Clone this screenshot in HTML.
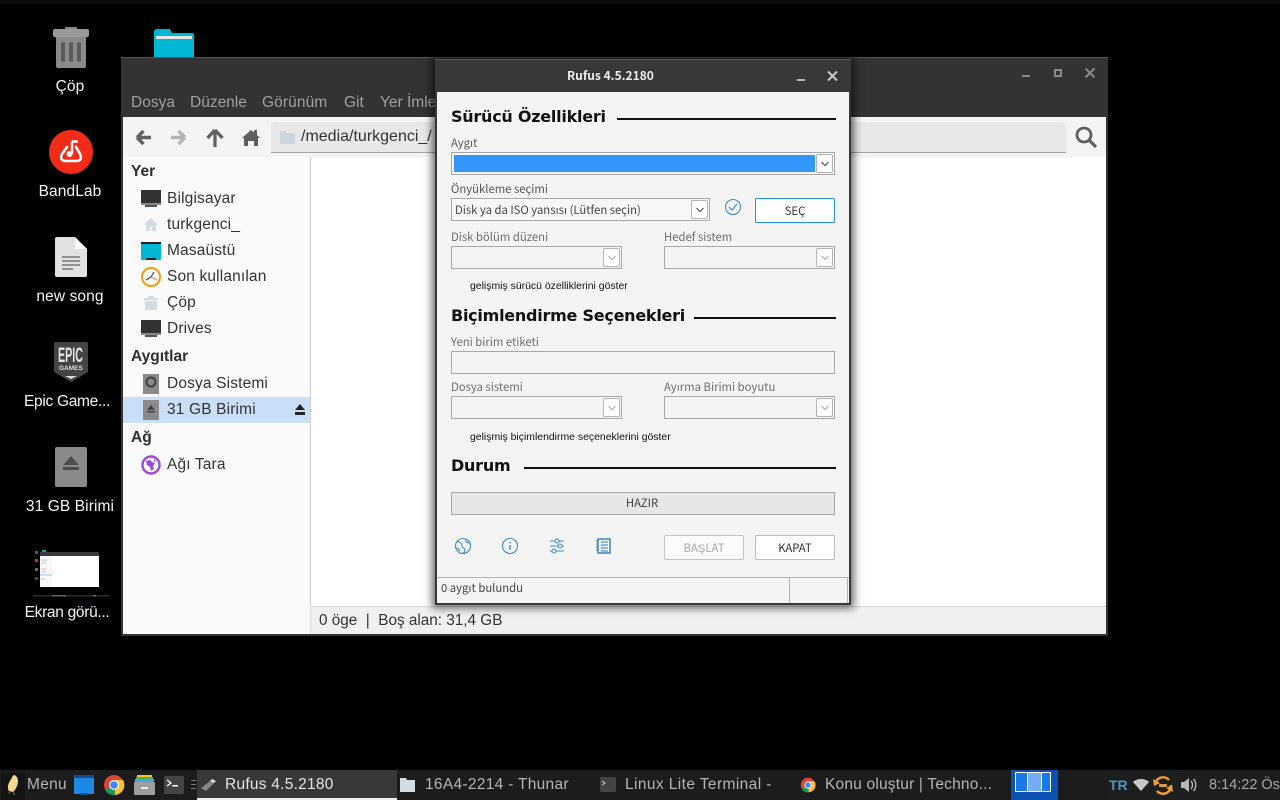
<!DOCTYPE html>
<html><head><meta charset="utf-8">
<style>
html,body{margin:0;padding:0;background:#000;width:1280px;height:800px;overflow:hidden}
div,span,svg{position:absolute}
.t{white-space:nowrap;font-family:"Liberation Sans",sans-serif;line-height:20px}
.d{color:#f4f4f4;font-size:15.5px;text-align:center;width:120px;left:10px;letter-spacing:.1px}
.s{color:#333;font-size:15.5px;left:167px;letter-spacing:.15px}
.h{color:#2e2e2e;font-size:15.5px;font-weight:bold;left:131px}
.m{color:#a0a0a0;font-size:15.5px;top:93px}
.r{font-family:"Noto Sans CJK JP","Liberation Sans",sans-serif;font-size:11.3px;color:#555;line-height:16px;white-space:nowrap}
.hd{font-family:"DejaVu Sans",sans-serif;font-weight:bold;font-size:16px;letter-spacing:-.25px;color:#111;line-height:22px;white-space:nowrap;left:451px}
.ln{background:#111;height:2px;right:0}
.cb{box-sizing:border-box;border:1px solid #a8a8a8;height:23px;background:#f4f4f4}
.ar{box-sizing:border-box;border:1px solid #b4b4b4;border-radius:2px;background:#fff;width:17px;height:19px;right:1px;top:1px}
.ar svg{left:3px;top:5px}
.tb{color:#b4b4b4;font-size:15.5px;top:775px;letter-spacing:.3px}
.g{left:470px;font-size:10.45px;color:#111}
</style></head><body>
<div style="left:0;top:0;width:1280px;height:4px;background:#0a0a0a"></div>

<!-- desktop icons -->
<svg style="left:50px;top:24px" width="42" height="46" viewBox="0 0 42 46"><rect x="15" y="3" width="12" height="4" rx="1" fill="#8a8a8a"/><rect x="3" y="5" width="36" height="8" rx="2" fill="#9a9a9a"/><path d="M6 13h30v29a2 2 0 0 1-2 2H8a2 2 0 0 1-2-2z" fill="#8a8a8a"/><rect x="11" y="18" width="4" height="20" rx="2" fill="#5c5c5c"/><rect x="19" y="18" width="4" height="20" rx="2" fill="#5c5c5c"/><rect x="27" y="18" width="4" height="20" rx="2" fill="#5c5c5c"/></svg>
<div class="t d" style="top:77px">Çöp</div>
<svg style="left:154px;top:29px" width="40" height="29" viewBox="0 0 40 29"><path d="M0 3a3 3 0 0 1 3-3h13l2 4h20a2 2 0 0 1 2 2v23H0z" fill="#00b8d4"/><rect x="2" y="7" width="36" height="3" fill="#e6e6e6"/></svg>
<svg style="left:49px;top:130px" width="44" height="44" viewBox="0 0 44 44"><circle cx="22" cy="22" r="22" fill="#f32c1a"/><path d="M18 17L13 24Q10 31 17 31H27Q34 31 31 24L27 17" fill="none" stroke="#fff" stroke-width="2.600" stroke-linecap="round"/><path d="M23 11.500V24M23 11.500h6" fill="none" stroke="#fff" stroke-width="2.400"/><circle cx="20.500" cy="24" r="3" fill="#fff"/></svg>
<div class="t d" style="top:182px">BandLab</div>
<svg style="left:55px;top:237px" width="32" height="40" viewBox="0 0 32 40"><path d="M2 0h18l12 12v26a2 2 0 0 1-2 2H2a2 2 0 0 1-2-2V2a2 2 0 0 1 2-2z" fill="#e2e2e2"/><path d="M20 0l12 12H20z" fill="#f8f8f8"/><path d="M7 20h18M7 24h18M7 28h18M7 32h11" stroke="#777" stroke-width="1.600"/></svg>
<div class="t d" style="top:287px">new song</div>
<svg style="left:54px;top:342px" width="34" height="40" viewBox="0 0 34 40"><path d="M2 0h30a2 2 0 0 1 2 2v28l-17 10L0 30V2a2 2 0 0 1 2-2z" fill="#444"/><path d="M11 34h12l-6 3z" fill="#ddd"/></svg>
<div class="t" style="left:58px;top:346px;font-size:21px;font-weight:bold;color:#e4e4e4;line-height:20px;transform:scaleX(.51);transform-origin:left">EPIC</div>
<div class="t" style="left:59px;top:365px;font-size:6.500px;font-weight:bold;color:#ddd;line-height:8px">GAMES</div>
<div class="t d" style="top:392px;left:7px;letter-spacing:-.3px">Epic Game...</div>
<div style="left:55px;top:447px;width:32px;height:40px;background:#8a8a8a;border-radius:2px"></div>
<svg style="left:55px;top:447px" width="32" height="40" viewBox="0 0 32 40"><path d="M16 9l8 9H8z" fill="#4d4d4d"/><rect x="8" y="20" width="16" height="3" fill="#4d4d4d"/></svg>
<div class="t d" style="top:497px">31 GB Birimi</div>
<!-- thumbnail -->
<svg style="left:30px;top:545px" width="80" height="55" viewBox="0 0 80 55"><rect x="10" y="7" width="59" height="35" fill="#fff"/><rect x="10" y="7" width="59" height="4" fill="#3a3a3a"/><rect x="10" y="11" width="12" height="31" fill="#f7f7f7"/><path d="M11 15h6M11 18h5M11 24h6M11 27h5M11 34h4" stroke="#c8c8c8" stroke-width="1"/><rect x="10" y="29" width="12" height="2" fill="#c9dff8"/><rect x="12" y="5" width="4" height="2" fill="#00a0b8"/><rect x="5" y="6" width="3" height="3" fill="#555"/><rect x="5" y="14" width="3" height="3" fill="#c8301c"/><rect x="5" y="23" width="3" height="3" fill="#666"/><rect x="5" y="32" width="3" height="3" fill="#444"/><rect x="3" y="50" width="77" height="1.500" fill="#2b2b2b"/><rect x="63" y="50" width="3" height="1.500" fill="#3a78c8"/><rect x="22" y="50" width="14" height="1.500" fill="#666"/></svg>
<div class="t d" style="top:603px;left:7px;letter-spacing:-.3px">Ekran görü...</div>

<!-- thunar window -->
<div style="left:121px;top:57px;width:987px;height:579px;background:#333;box-shadow:inset 0 1px 0 #555"></div>
<div class="t m" style="left:131px">Dosya</div>
<div class="t m" style="left:190px">Düzenle</div>
<div class="t m" style="left:262px;letter-spacing:.1px">Görünüm</div>
<div class="t m" style="left:344px">Git</div>
<div class="t m" style="left:380px">Yer İmleri</div>
<svg style="left:1018px;top:64px" width="82" height="20" viewBox="0 0 82 20"><rect x="4" y="11" width="8" height="2" fill="#8a8a8a"/><rect x="37" y="6" width="6" height="6" fill="none" stroke="#8a8a8a" stroke-width="2"/><path d="M67.500 4.500l9 9M76.500 4.500l-9 9" stroke="#8a8a8a" stroke-width="2"/></svg>
<div style="left:123px;top:117px;width:983px;height:40px;background:#f4f4f4"></div>
<svg style="left:130px;top:125px" width="140" height="24" viewBox="0 0 140 24"><path d="M7 12.500l6.500-6.500M7 12.500l6.500 6.500M7 12.500h14" fill="none" stroke="#5f5f5f" stroke-width="3.400"/><path d="M55 12.500l-6.500-6.500M55 12.500l-6.500 6.500M55 12.500H41" fill="none" stroke="#b5b5b5" stroke-width="3.400"/><path d="M85 5l-7.500 8M85 5l7.500 8M85 5v17" fill="none" stroke="#5f5f5f" stroke-width="3.200"/><path d="M121 5l3 2.500V5h3v5l3 3h-2v8h-4v-5h-6v5h-4v-8h-2z" fill="#5f5f5f"/></svg>
<div style="left:271px;top:122px;width:795px;height:31px;background:#e8e8e8;border-bottom:1px solid #a5a5a5;border-radius:4px 4px 0 0;box-sizing:border-box"></div>
<svg style="left:280px;top:130px" width="15" height="14" viewBox="0 0 15 14"><path d="M0 1h6l1 2h8v11H0z" fill="#ccd6de"/></svg>
<div class="t" style="left:301px;top:127px;font-size:16px;color:#333">/media/turkgenci_/</div>
<svg style="left:1074px;top:125px" width="24" height="24" viewBox="0 0 24 24"><circle cx="10" cy="10" r="7" fill="none" stroke="#5f5f5f" stroke-width="2.800"/><path d="M15 15l7 7" stroke="#5f5f5f" stroke-width="3.200"/></svg>

<div style="left:123px;top:157px;width:187px;height:477px;background:#fafafa"></div>
<div style="left:310px;top:157px;width:1px;height:449px;background:#ccc"></div>
<div style="left:311px;top:157px;width:795px;height:449px;background:#fff"></div>
<div style="left:311px;top:606px;width:795px;height:28px;background:#f0f0f0;border-top:1px solid #d8d8d8;box-sizing:border-box"></div>
<div style="left:310px;top:606px;width:1px;height:28px;background:#e0e0e0"></div>
<div class="t" style="left:319px;top:611px;font-size:15.300px;color:#333">0 öge &nbsp;|&nbsp; Boş alan: 31,4 GB</div>

<div class="t h" style="top:162px">Yer</div>
<div class="t s" style="top:189px">Bilgisayar</div>
<div class="t s" style="top:215px">turkgenci_</div>
<div class="t s" style="top:241px">Masaüstü</div>
<div class="t s" style="top:267px">Son kullanılan</div>
<div class="t s" style="top:293px">Çöp</div>
<div class="t s" style="top:319px">Drives</div>
<div class="t h" style="top:347px">Aygıtlar</div>
<div style="left:123px;top:397px;width:187px;height:26px;background:#c9dff8"></div>
<div class="t s" style="top:374px">Dosya Sistemi</div>
<div class="t s" style="top:400px">31 GB Birimi</div>
<div class="t h" style="top:428px">Ağ</div>
<div class="t s" style="top:455px">Ağı Tara</div>

<svg style="left:140px;top:188px" width="22" height="292" viewBox="0 0 22 292">
<rect x="1" y="2" width="20" height="15" fill="#333"/><rect x="1" y="15" width="20" height="2" fill="#888"/><rect x="5" y="17" width="12" height="2" fill="#555"/>
<path d="M11 30l7 6.500h-2V43h-4v-4h-2v4H6v-6.500H4z" fill="#d2dce3"/>
<rect x="1" y="54" width="20" height="18" fill="#00b8d4"/><rect x="1" y="54" width="20" height="2" fill="#222"/><rect x="6" y="70" width="10" height="2" fill="#222"/>
<circle cx="11" cy="89" r="9" fill="#fff" stroke="#f59a0b" stroke-width="2"/><path d="M11 89l3-5M11 89l-5 3" stroke="#444" stroke-width="1.200"/><path d="M11 89l6 3" stroke="#d88" stroke-width="1"/>
<path d="M4 110h14v2H4zM5 113h12v9H5z" fill="#d2dce3"/><rect x="8" y="108" width="6" height="2" fill="#d2dce3"/>
<rect x="1" y="132" width="20" height="15" fill="#333"/><rect x="1" y="145" width="20" height="2" fill="#888"/><rect x="5" y="147" width="12" height="2" fill="#555"/>
<rect x="3" y="186" width="16" height="20" fill="#8a8a8a"/><circle cx="11" cy="194" r="4.500" fill="none" stroke="#3f3f3f" stroke-width="2"/>
<rect x="3" y="212" width="16" height="20" fill="#8a8a8a"/><path d="M11 217l4 5H7z" fill="#444"/><rect x="7" y="223" width="8" height="1.500" fill="#444"/>
<circle cx="11" cy="277" r="8.500" fill="#fff" stroke="#a048d8" stroke-width="2.400"/><path d="M6 273l4-1 2 2 3 1-2 3 1 3-3 2-1-4-3-2zM14 271l2 2-2 1z" fill="#a048d8"/>
</svg>
<svg style="left:294px;top:403px" width="12" height="14" viewBox="0 0 12 14"><path d="M6 1l5 6H1z" fill="#222"/><rect x="1" y="9" width="10" height="3" fill="#222"/></svg>

<!-- rufus -->
<div style="left:435px;top:59px;width:416px;height:546px;background:#383838;box-shadow:0 0 8px 3px rgba(0,0,0,.6),inset 0 1px 0 #555"></div>
<div style="left:437px;top:92px;width:412px;height:511px;background:#f4f4f4"></div>
<div class="t" style="left:567px;top:66px;font-family:'Noto Sans CJK JP','Liberation Sans',sans-serif;font-weight:bold;font-size:12px;color:#eee">Rufus 4.5.2180</div>
<svg style="left:793px;top:68px" width="50" height="16" viewBox="0 0 50 16"><rect x="4" y="11" width="8" height="2" fill="#b5b5b5"/><path d="M35 3.500l9 9M44 3.500l-9 9" stroke="#c8c8c8" stroke-width="2"/></svg>

<div class="hd" style="top:106px">Sürücü Özellikleri</div>
<div class="ln" style="left:617px;top:118px;width:219px"></div>
<div class="r" style="left:451px;top:135px">Aygıt</div>
<div class="cb" style="left:451px;top:152px;width:384px"><div style="left:2px;top:2px;width:361px;height:17px;background:#3296fa"></div><div class="ar"><svg width="10" height="8"><path d="M1.500 2l3.500 3.500L8.500 2" fill="none" stroke="#444"/></svg></div></div>

<div class="r" style="left:451px;top:181px">Önyükleme seçimi</div>
<div class="cb" style="left:451px;top:198px;width:259px;background:#f7f7f7"><div class="ar"><svg width="10" height="8"><path d="M1.500 2l3.500 3.500L8.500 2" fill="none" stroke="#444"/></svg></div></div>
<div class="r" style="left:455px;top:202px;color:#444">Disk ya da ISO yansısı (Lütfen seçin)</div>
<svg style="left:724px;top:198px" width="18" height="18" viewBox="0 0 18 18"><circle cx="9" cy="9" r="7.500" fill="none" stroke="#3a8fc8" stroke-width="1.100"/><path d="M5 9l3 3 5-6" fill="none" stroke="#3a8fc8" stroke-width="1.100"/></svg>
<div style="left:755px;top:198px;width:80px;height:25px;box-sizing:border-box;background:#fff;border:1px solid #1e90e6;border-radius:2px"></div>
<div class="r" style="left:755px;width:80px;text-align:center;top:203px;color:#333">SEÇ</div>

<div class="r" style="left:451px;top:229px;color:#6e6e6e">Disk bölüm düzeni</div>
<div class="r" style="left:664px;top:229px;color:#6e6e6e">Hedef sistem</div>
<div class="cb" style="left:451px;top:246px;width:171px"><div class="ar"><svg width="10" height="8"><path d="M1.500 2l3.500 3.500L8.500 2" fill="none" stroke="#aaa"/></svg></div></div>
<div class="cb" style="left:664px;top:246px;width:171px"><div class="ar"><svg width="10" height="8"><path d="M1.500 2l3.500 3.500L8.500 2" fill="none" stroke="#aaa"/></svg></div></div>
<div class="t g" style="top:278px;line-height:18px;height:18px">gelişmiş sürücü özelliklerini göster</div>

<div class="hd" style="top:305px">Biçimlendirme Seçenekleri</div>
<div class="ln" style="left:694px;top:317px;width:142px"></div>
<div class="r" style="left:451px;top:334px;color:#6e6e6e">Yeni birim etiketi</div>
<div class="cb" style="left:451px;top:351px;width:384px"></div>
<div class="r" style="left:451px;top:379px;color:#6e6e6e">Dosya sistemi</div>
<div class="r" style="left:664px;top:379px;color:#6e6e6e">Ayırma Birimi boyutu</div>
<div class="cb" style="left:451px;top:396px;width:171px"><div class="ar"><svg width="10" height="8"><path d="M1.500 2l3.500 3.500L8.500 2" fill="none" stroke="#aaa"/></svg></div></div>
<div class="cb" style="left:664px;top:396px;width:171px"><div class="ar"><svg width="10" height="8"><path d="M1.500 2l3.500 3.500L8.500 2" fill="none" stroke="#aaa"/></svg></div></div>
<div class="t g" style="top:429px;line-height:18px;height:18px">gelişmiş biçimlendirme seçeneklerini göster</div>

<div class="hd" style="top:455px">Durum</div>
<div class="ln" style="left:524px;top:467px;width:312px"></div>
<div class="cb" style="left:451px;top:492px;width:384px;background:#e6e6e6"></div>
<div class="r" style="left:451px;width:382px;text-align:center;top:495px;color:#444">HAZIR</div>

<svg style="left:453px;top:536px" width="170" height="20" viewBox="0 0 170 20" fill="none" stroke="#3a8fc8" stroke-width="1.100">
<circle cx="10" cy="10" r="7.500"/><path d="M4 5c3 1 5 3 5 5s3 2 3 4-2 3-2 3M13 3c-1 3 1 4 4 4M3 12c2 0 3 1 4 3"/>
<circle cx="57" cy="10" r="7.500"/><path d="M57 9v5M57 6v1.500" stroke-width="1.400"/>
<path d="M97 5h14M97 10h14M97 15h14"/><circle cx="104" cy="5" r="2" fill="#f4f4f4"/><circle cx="107" cy="10" r="2" fill="#f4f4f4"/><circle cx="101" cy="15" r="2" fill="#f4f4f4"/>
<rect x="145" y="3" width="12" height="14" stroke-width="1.400" stroke="#2a7ec0"/><path d="M148 6h7M148 9h7M148 12h7M148 15h7" stroke="#2a7ec0"/><path d="M143 5h2M143 8h2M143 11h2M143 14h2" stroke="#2a7ec0"/>
</svg>
<div style="left:664px;top:535px;width:80px;height:25px;box-sizing:border-box;background:#fbfbfb;border:1px solid #c4c4c4;border-radius:2px"></div>
<div class="r" style="left:664px;width:80px;text-align:center;top:540px;color:#a8a8a8">BAŞLAT</div>
<div style="left:755px;top:535px;width:80px;height:25px;box-sizing:border-box;background:#fff;border:1px solid #bdbdbd;border-radius:2px"></div>
<div class="r" style="left:755px;width:80px;text-align:center;top:540px;color:#333">KAPAT</div>
<div style="left:437px;top:577px;width:412px;height:1px;background:#b4b4b4"></div>
<div style="left:789px;top:578px;width:1px;height:25px;background:#b4b4b4"></div>
<div style="left:847px;top:578px;width:1px;height:25px;background:#b4b4b4"></div>
<div class="r" style="left:441px;top:580px;color:#444">0 aygıt bulundu</div>

<!-- taskbar -->
<div style="left:0;top:770px;width:1280px;height:30px;background:#1c1c1c"></div>
<div style="left:1px;top:773px;width:24px;height:27px;background:#141414"></div>
<svg style="left:6px;top:775px" width="14" height="22" viewBox="0 0 14 22"><path d="M8 0c4 1 5 6 3 11-1 3-3 5-4 6l-4-1c-2-3-1-7 1-10s2-5 4-6z" fill="#f5d98a"/><path d="M4 16l-1 3M7 17l2 3" stroke="#8a7440" stroke-width="1"/></svg>
<div class="t tb" style="left:27px">Menu</div>
<svg style="left:73px;top:775px" width="22" height="20" viewBox="0 0 22 20"><rect x="1" width="20" height="3" fill="#12508c"/><rect x="1" y="3" width="20" height="16" fill="#1e88e5"/><rect x="7" y="18" width="8" height="2" fill="#12508c"/></svg>
<svg style="left:103px;top:774px" width="22" height="22" viewBox="0 0 22 22"><circle cx="11" cy="11" r="10" fill="#db4437"/><path d="M11 11L2 16a10 10 0 0 0 10 5z" fill="#0f9d58"/><path d="M11 6h9a10 10 0 0 1-8 15z" fill="#fbc02d"/><circle cx="11" cy="11" r="5" fill="#fff"/><circle cx="11" cy="11" r="3.800" fill="#4285f4"/></svg>
<svg style="left:134px;top:775px" width="21" height="20" viewBox="0 0 21 20"><rect x="3" y="0" width="15" height="3" fill="#fbc02d"/><rect x="2" y="2" width="17" height="3" fill="#4caf50"/><rect x="1" y="4" width="19" height="3" fill="#42a5f5"/><rect x="0" y="7" width="21" height="13" rx="1" fill="#9e9e9e"/><rect x="7" y="12" width="7" height="2" fill="#eee"/></svg>
<svg style="left:164px;top:776px" width="20" height="18" viewBox="0 0 20 18"><rect width="20" height="18" rx="1" fill="#444"/><path d="M3 4l4 3-4 3" fill="none" stroke="#fff" stroke-width="1.300"/><rect x="8" y="9" width="6" height="1.500" fill="#fff"/></svg>
<div style="left:191px;top:780px;width:5px;height:10px;background:repeating-linear-gradient(#777 0 1px,transparent 1px 4px)"></div>
<div style="left:197px;top:770px;width:200px;height:30px;background:#383838"></div>
<div style="left:197px;top:798px;width:200px;height:2px;background:#eee"></div>
<svg style="left:199px;top:778px" width="18" height="14" viewBox="0 0 18 14"><path d="M2 10l9-7 4 2-8 8z" fill="#888"/><path d="M11 3l2-2 4 2-2 2z" fill="#ddd"/></svg>
<div class="t" style="left:225px;top:775px;font-size:15.500px;color:#e4e4e4;letter-spacing:.25px">Rufus 4.5.2180</div>
<svg style="left:400px;top:778px" width="15" height="14" viewBox="0 0 15 14"><path d="M0 0h6l1 2h8v12H0z" fill="#d2dce3"/></svg>
<div class="t tb" style="left:425px">16A4-2214 - Thunar</div>
<svg style="left:600px;top:777px" width="16" height="15" viewBox="0 0 16 15"><rect width="16" height="15" rx="1" fill="#444"/><path d="M2 4l3 2-3 2" fill="none" stroke="#ccc"/></svg>
<div class="t tb" style="left:625px;letter-spacing:.4px">Linux Lite Terminal -</div>
<svg style="left:800px;top:777px" width="16" height="16" viewBox="0 0 22 22"><circle cx="11" cy="11" r="10" fill="#db4437"/><path d="M11 11L2 16a10 10 0 0 0 10 5z" fill="#0f9d58"/><path d="M11 6h9a10 10 0 0 1-8 15z" fill="#fbc02d"/><circle cx="11" cy="11" r="5" fill="#fff"/><circle cx="11" cy="11" r="3.800" fill="#4285f4"/></svg>
<div class="t tb" style="left:825px;letter-spacing:.2px">Konu oluştur | Techno...</div>
<div style="left:1011px;top:770px;width:47px;height:30px;background:#0d52b0"></div>
<div style="left:1015px;top:772px;width:36px;height:20px;box-sizing:border-box;border:1px solid #fff;background:#1a78e8"></div>
<div style="left:1027px;top:772px;width:15px;height:20px;box-sizing:border-box;border:1px solid #fff;background:#74aef0"></div>
<div style="left:1107px;top:770px;width:173px;height:30px;background:#1e1e1e"></div>
<div class="t" style="left:1109px;top:775px;font-size:14px;font-weight:bold;color:#4a9bc8">TR</div>
<svg style="left:1133px;top:778px" width="16" height="14" viewBox="0 0 16 14"><path d="M0 4c4-4 12-4 16 0l-8 9z" fill="#c8c8c8"/></svg>
<svg style="left:1152px;top:775px" width="22" height="21" viewBox="0 0 22 21"><path d="M3 10a8 8 0 0 1 14-5M19 10a8 8 0 0 1-14 6" fill="none" stroke="#f0a030" stroke-width="2.400"/><path d="M1 4l1 7 6-3zM21 17l-1-7-6 3z" fill="#f0a030"/><rect x="7" y="9" width="8" height="3" rx="1" fill="#d8a040"/></svg>
<svg style="left:1181px;top:777px" width="16" height="16" viewBox="0 0 16 16"><path d="M0 5h3l5-4v14l-5-4H0z" fill="#b5b5b5"/><path d="M10 4c2 2 2 6 0 8M12.500 2c3 3 3 9 0 12" fill="none" stroke="#b5b5b5" stroke-width="1.400"/></svg>
<div class="t" style="left:1209px;top:775px;font-size:14.500px;color:#a8a8a8">8:14:22 Ös</div>
</body></html>
